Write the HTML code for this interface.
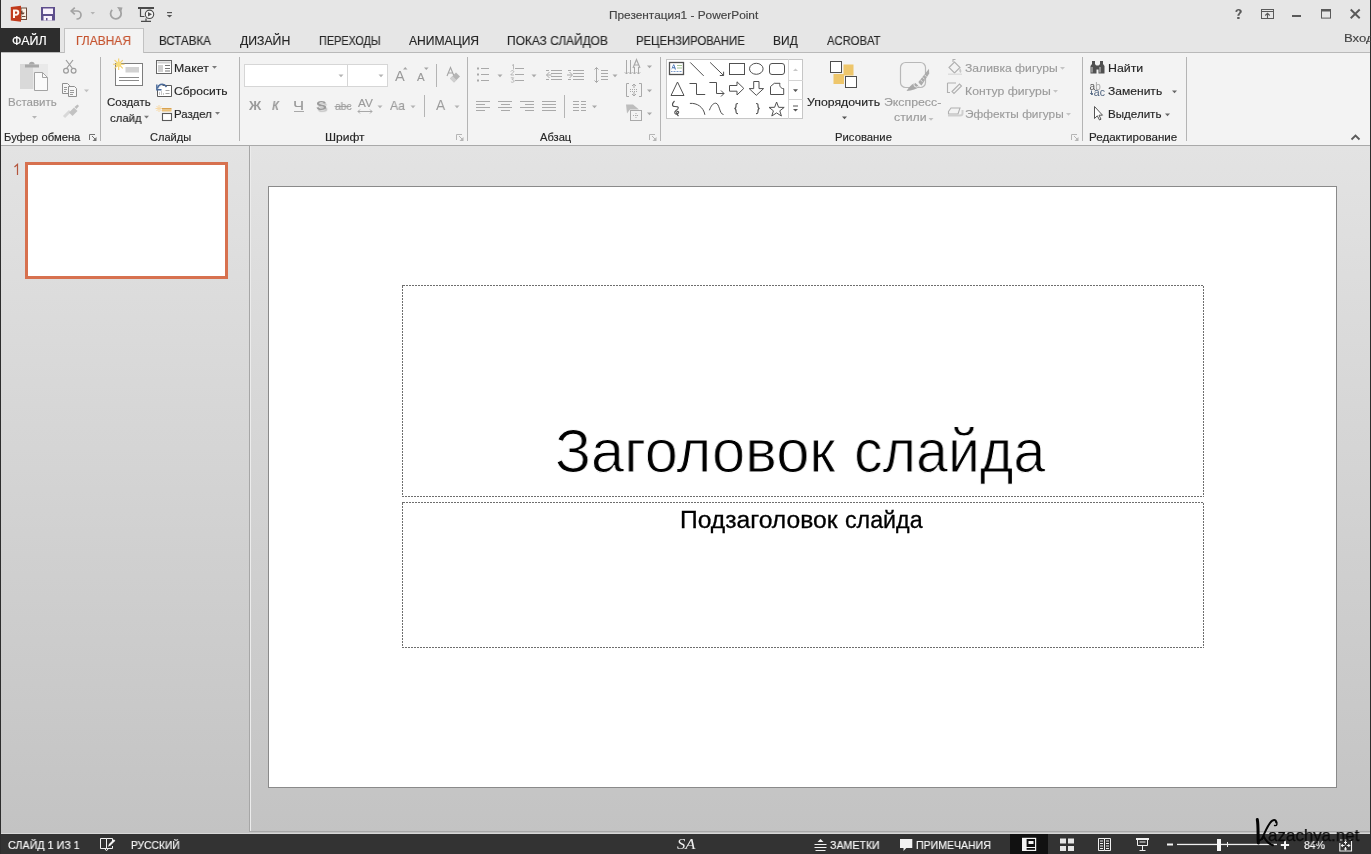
<!DOCTYPE html>
<html><head><meta charset="utf-8"><style>
*{margin:0;padding:0;box-sizing:border-box}
html,body{width:1371px;height:854px;overflow:hidden}
body{position:relative;background:#e6e6e6;font-family:"Liberation Sans",sans-serif}
.abs{position:absolute}
.tx{position:absolute;white-space:pre;transform-origin:0 0;will-change:transform}

</style></head><body>
<!-- title+tab row bg -->
<div class="abs" style="left:0;top:0;width:1371px;height:52px;background:#e6e6e6"></div>
<!-- file tab -->
<div class="abs" style="left:0;top:28px;width:60px;height:25px;background:#2d2d2d"></div>
<!-- ribbon -->
<div class="abs" style="left:0;top:52px;width:1371px;height:94px;background:#f3f3f3;border-top:1px solid #b9b9b9;border-bottom:1px solid #a9a9a9"></div>
<!-- active tab -->
<div class="abs" style="left:64px;top:28px;width:80px;height:25px;background:#f3f3f3;border:1px solid #c2c2c2;border-bottom:none"></div>
<!-- panes -->
<div class="abs" style="left:0;top:146px;width:1371px;height:688px;background:linear-gradient(#e3e3e3,#c3c3c3)"></div>
<div class="abs" style="left:249px;top:146px;width:1px;height:686px;background:#a6a6a6"></div>
<div class="abs" style="left:250px;top:146px;width:1px;height:686px;background:#ececec"></div>
<div class="abs" style="left:250px;top:831px;width:1121px;height:1px;background:#a8a8a8"></div>
<div class="abs" style="left:0;top:833px;width:1371px;height:1px;background:#d8d8d8"></div>
<!-- thumbnail -->
<div class="abs" style="left:25px;top:162px;width:203px;height:117px;background:#fff;border:3px solid #d7714f"></div>
<!-- slide -->
<div class="abs" style="left:268px;top:186px;width:1069px;height:602px;background:#fff;border:1px solid #8a8a8a"></div>
<!-- placeholders -->
<svg class="abs" style="left:0;top:0" width="1371" height="854"><g fill="none" stroke="#6e6e6e" stroke-width="1" stroke-dasharray="2 1" shape-rendering="crispEdges"><rect x="402.5" y="285.5" width="801" height="211"/><rect x="402.5" y="502.5" width="801" height="145"/></g></svg>
<!-- status bar -->
<div class="abs" style="left:0;top:834px;width:1371px;height:20px;background:#333333"></div>
<div class="abs" style="left:1010px;top:834px;width:38px;height:20px;background:#111"></div>
<!-- window borders -->
<div class="abs" style="left:0;top:0;width:1px;height:854px;background:#2d2d2d"></div>
<div class="abs" style="left:1370px;top:0;width:1px;height:854px;background:#2d2d2d"></div>
<!-- font boxes -->
<div class="abs" style="left:244px;top:64px;width:144px;height:23px;background:#fff;border:1px solid #d6d6d6"></div>
<div class="abs" style="left:347px;top:64px;width:1px;height:23px;background:#d6d6d6"></div>
<!-- gallery -->
<div class="abs" style="left:666px;top:59px;width:137px;height:60px;background:#fff;border:1px solid #c6c6c6"></div>
<div class="abs" style="left:788px;top:59px;width:1px;height:60px;background:#d4d4d4"></div>
<div class="abs" style="left:788px;top:80px;width:15px;height:1px;background:#d4d4d4"></div>
<div class="abs" style="left:788px;top:99px;width:15px;height:1px;background:#d4d4d4"></div>

<svg class="abs" style="left:0;top:0;will-change:transform" width="1371" height="854" viewBox="0 0 1371 854">
<!-- group separators -->
<g fill="none" stroke="#b4b4b4" stroke-width="1" shape-rendering="crispEdges">
 <line x1="100.5" y1="57" x2="100.5" y2="141"/>
 <line x1="239.5" y1="57" x2="239.5" y2="141"/>
 <line x1="467.5" y1="57" x2="467.5" y2="141"/>
 <line x1="660.5" y1="57" x2="660.5" y2="141"/>
 <line x1="1082.5" y1="57" x2="1082.5" y2="141"/>
 <line x1="1186.5" y1="57" x2="1186.5" y2="141"/>
 <line x1="436.5" y1="64" x2="436.5" y2="87"/>
 <line x1="424.5" y1="95" x2="424.5" y2="117"/>
 <line x1="564.5" y1="95" x2="564.5" y2="118"/>
</g>
<!-- ===== QAT ===== -->
<g>
 <rect x="21" y="8" width="5.5" height="11.5" fill="#fbf3e8" stroke="#6b4a3a" stroke-width="1"/>
 <path d="M22.5 10.5 a2 2 0 1 0 2 2 h-2z" fill="#6b4a3a"/>
 <line x1="22" y1="16.5" x2="25.5" y2="16.5" stroke="#6b4a3a" stroke-width="1"/>
 <path d="M10.8 7 L21 5.8 L21 21.8 L10.8 20.5 Z" fill="#c13a1b"/>
 <path d="M14 18 V10.5 h2.2 a2.1 2.1 0 0 1 0 4.2 h-2.2" fill="none" stroke="#fff6ee" stroke-width="2"/>
 <!-- save -->
 <rect x="41" y="7" width="14" height="13.5" fill="#5e4e8c"/>
 <rect x="43" y="8.5" width="10" height="5.5" fill="#f8f0fb"/>
 <path d="M43.5 20.5 V16 h8.5 v4.5 h-4.5 v-2.5 h-1.5 v2.5z" fill="#f8f0fb"/>
 <!-- undo -->
 <g fill="none" stroke="#a3a3a3" stroke-width="1.7">
  <path d="M71.5 11 H77 a4 4 0 0 1 0 8 h-0.5"/>
  <path d="M74.8 7.6 L71.2 11 L74.8 14.4"/>
 </g>
 <path d="M90.5 12 h4.5 l-2.25 2.5z" fill="#b5b5b5"/>
 <!-- redo -->
 <g fill="none" stroke="#a3a3a3" stroke-width="1.8">
  <path d="M119.3 9.6 A5.3 5.3 0 1 1 112.2 9.8"/>
 </g>
 <path d="M117 7 L122.5 7.5 L121 12.5 Z" fill="#a3a3a3"/>
 <!-- slideshow -->
 <rect x="138" y="7" width="16" height="2" fill="#4a4a4a"/>
 <path d="M140.5 9 V16.5 H144.5" fill="none" stroke="#4a4a4a" stroke-width="1.2"/>
 <circle cx="149.5" cy="14.3" r="4.2" fill="#f4f4f4" stroke="#4a4a4a" stroke-width="1.1"/>
 <path d="M148 12 L152 14.3 L148 16.6Z" fill="#555"/>
 <path d="M146 18.5 V21 M141 21.3 H151" fill="none" stroke="#4a4a4a" stroke-width="1.2"/>
 <rect x="167" y="12" width="5" height="1.2" fill="#555"/>
 <path d="M166.8 15 h5.4 l-2.7 2.6z" fill="#555"/>
</g>
<!-- ===== window controls ===== -->
<g fill="none" stroke="#5a5a5a">
 <rect x="1261.5" y="9.5" width="12" height="9" stroke-width="1"/>
 <line x1="1262" y1="11.5" x2="1273" y2="11.5" stroke-width="1"/>
 <path d="M1267.5 18 V13.5 M1265.3 15.5 L1267.5 13.2 L1269.7 15.5" stroke-width="1.1"/>
 <line x1="1292" y1="16" x2="1301" y2="16" stroke-width="2"/>
 <rect x="1321.5" y="9.5" width="9" height="8.6" stroke-width="1"/>
 <line x1="1321.5" y1="10.5" x2="1330.5" y2="10.5" stroke-width="2"/>
 <path d="M1350.7 9.5 L1359.7 18.3 M1359.7 9.5 L1350.7 18.3" stroke-width="1.9"/>
</g>
<path d="M1235.3 11.7 C1235.5 9.8 1236.8 9 1238.6 9 C1240.6 9 1241.8 10 1241.8 11.6 C1241.8 13.6 1239.4 13.8 1239.4 15.8 H1237.3 C1237.3 13.4 1239.6 13 1239.6 11.7 C1239.6 11 1239.1 10.6 1238.5 10.6 C1237.8 10.6 1237.3 11 1237.2 11.9 Z M1237.2 17 h2.4 v1.9 h-2.4z" fill="#5a5a5a"/>
<!-- ===== Clipboard group ===== -->
<g>
 <rect x="20" y="64" width="28" height="25" fill="#e9e9e9"/>
 <rect x="20" y="64" width="13" height="25" fill="#d9d9d9"/>
 <path d="M29 64.5 a2.8 2.8 0 0 1 5.6 0z" fill="#a9a9a9"/>
 <rect x="25" y="64.5" width="14" height="3" fill="#a9a9a9"/>
 <path d="M34.5 72.5 H42.5 L47.5 77.5 V90.5 H34.5Z" fill="#fafafa" stroke="#a3a3a3" stroke-width="1"/>
 <path d="M42.5 72.5 V77.5 H47.5" fill="none" stroke="#a3a3a3"/>
 <path d="M32 116 h5 l-2.5 2.8z" fill="#b5b5b5"/>
 <!-- scissors -->
 <g fill="none" stroke="#9c9c9c" stroke-width="1.2">
  <path d="M66 60 L72.5 68.5 M73 60 L66.5 68.5"/>
  <circle cx="66" cy="70.8" r="2.4"/>
  <circle cx="73.6" cy="70.8" r="2.4"/>
 </g>
 <!-- copy -->
 <g fill="#f6f6f6" stroke="#8f8f8f" stroke-width="1">
  <path d="M62.5 83.5 H67.5 L69.5 85.5 V93.5 H62.5Z"/>
  <path d="M68.5 86.5 H74.5 L76.5 88.5 V96.5 H68.5Z"/>
 </g>
 <path d="M64 87.5 h3 M64 89.5 h3 M64 91.5 h2 M70 90.5 h4 M70 92.5 h4 M70 94.5 h3" stroke="#9a9a9a" stroke-width="1" shape-rendering="crispEdges"/>
 <path d="M84 89.5 h5 l-2.5 2.8z" fill="#c0c0c0"/>
 <!-- format painter -->
 <path d="M64 117 L70 111" stroke="#d8d8d8" stroke-width="3"/>
 <path d="M69 112.5 L74 107.5 L77.5 111 L72.5 116Z" fill="#c2c2c2"/>
 <path d="M74.5 107 L77.5 104.5 L79 106 L76.5 109Z" fill="#bdbdbd"/>
</g>
<!-- ===== Slides group ===== -->
<g>
 <rect x="115.5" y="63.5" width="27" height="22" fill="#fff" stroke="#7d7d7d" stroke-width="1"/>
 <rect x="125.5" y="67" width="13.5" height="5.5" fill="#d2d2d2"/>
 <path d="M119 77.5 H139 M119 80.5 H139" stroke="#8c8c8c" stroke-width="1"/>
 <g stroke="#f2cf6a" stroke-width="1.1">
  <path d="M118.7 58.5 V70 M113 64.2 H124.5 M114.6 60.1 L122.8 68.3 M122.8 60.1 L114.6 68.3"/>
 </g>
 <circle cx="118.7" cy="64.2" r="2.6" fill="#f7dc7a"/>
 <path d="M144 115.8 h5 l-2.5 2.8z" fill="#7a7a7a"/>
 <!-- layout -->
 <rect x="156.5" y="60.5" width="15" height="13" fill="#fff" stroke="#666" stroke-width="1"/>
 <rect x="157.5" y="61.5" width="13" height="2" fill="#d0d0d0"/>
 <rect x="158" y="65" width="5" height="7" fill="#d0d0d0"/>
 <path d="M165 65.5 h5 M165 68.5 h5 M165 71 h5" stroke="#777" stroke-width="1"/>
 <path d="M212 66 h5 l-2.5 2.8z" fill="#7a7a7a"/>
 <!-- reset -->
 <path d="M162.5 85.5 H171.5 V96.5 H157.5 V90" fill="#fff" stroke="#5a5a5a" stroke-width="1"/>
 <path d="M165.5 90.5 h4 M165.5 93.5 h4" stroke="#9a9a9a" stroke-width="0.9"/>
 <path d="M159.5 95 v-3 M161.5 95 v-4 M163.5 95 v-2" stroke="#c9c9c9" stroke-width="1"/>
 <path d="M166.5 87 C165 84.5 162.5 83.8 160.5 84.5 C159 85 158 86.5 157.3 88.6" fill="none" stroke="#4a6a9a" stroke-width="1.5"/>
 <path d="M156.8 84.5 V89.8 H161.5" fill="none" stroke="#4a6a9a" stroke-width="1.4"/>
 <!-- section -->
 <g stroke="#f7d9a6" stroke-width="1">
  <path d="M159 105 V112 M155.5 108.5 H162.5 M156.5 106 L161.5 111 M161.5 106 L156.5 111"/>
 </g>
 <rect x="162" y="108" width="9.5" height="1.5" fill="#d9a24f"/>
 <rect x="162" y="109.5" width="9.5" height="2" fill="#ecc27a"/>
 <rect x="162.5" y="113.5" width="9" height="7" fill="#fff" stroke="#5a5a5a" stroke-width="1.1"/>
 <path d="M215 112 h5 l-2.5 2.8z" fill="#7a7a7a"/>
</g>

<!-- launchers -->
<g id="launchers" fill="none" stroke="#707070" stroke-width="1">
 <path d="M89.5 140 V134.5 H95"/>
 <path d="M456.5 140 V134.5 H462" stroke="#b5b5b5"/>
 <path d="M649.5 140 V134.5 H655" stroke="#b5b5b5"/>
 <path d="M1071.5 140 V134.5 H1077" stroke="#b5b5b5"/>
</g>
<g fill="#707070">
 <path d="M96.5 137 V141 H92.5Z"/><path d="M92 136 L95 139" stroke="#707070" stroke-width="1"/>
 <path d="M463.5 137 V141 H459.5Z" fill="#b5b5b5"/><path d="M459 136 L462 139" stroke="#b5b5b5" stroke-width="1"/>
 <path d="M656.5 137 V141 H652.5Z" fill="#b5b5b5"/><path d="M652 136 L655 139" stroke="#b5b5b5" stroke-width="1"/>
 <path d="M1078.5 137 V141 H1074.5Z" fill="#b5b5b5"/><path d="M1074 136 L1077 139" stroke="#b5b5b5" stroke-width="1"/>
</g>
<!-- ===== Font group ===== -->
<g fill="#b3b3b3">
 <path d="M338.5 74.5 h5 l-2.5 2.8z"/>
 <path d="M378.5 74.5 h5 l-2.5 2.8z"/>
 <path d="M403 69.5 h4.5 l-2.25 -2.5z" fill="#a5a5a5"/>
 <path d="M424 67.5 h4.6 l-2.3 2.5z" fill="#a5a5a5"/>
 <path d="M377.5 105.5 h5 l-2.5 2.8z"/>
 <path d="M410.5 105.5 h5 l-2.5 2.8z"/>
 <path d="M454.5 105.5 h5 l-2.5 2.8z"/>
</g>
<g fill="none" stroke="#a8a8a8" stroke-width="1">
 <path d="M294 111.5 h10"/>
 <path d="M334.5 106.5 h16.5"/>
 <path d="M358 111.5 h14 M360 109.5 l-2 2 l2 2 M370 109.5 l2 2 l-2 2"/>
</g>
<!-- clear formatting -->
<path d="M447 76 L450.5 67.5 L454 76 M448.3 73 h4.4" fill="none" stroke="#a5a5a5" stroke-width="1.1"/>
<path d="M450 78.5 L456 72.5 L460 76.5 L454 82.5Z" fill="#b5b5b5"/>
<path d="M450 78.5 L452.5 76 L456.5 80 L454 82.5Z" fill="#d0d0d0"/>
<!-- ===== Paragraph group ===== -->
<g fill="#a9a9a9">
 <rect x="477" y="67.5" width="2" height="2"/><rect x="477" y="73.5" width="2" height="2"/><rect x="477" y="79.5" width="2" height="2"/>
 <path d="M497.5 74.5 h5 l-2.5 2.8z"/>
 <path d="M531.5 74.5 h5 l-2.5 2.8z"/>
 <path d="M612.5 74.5 h5 l-2.5 2.8z"/>
 <path d="M647 65.5 h5 l-2.5 2.8z"/>
 <path d="M647 89.5 h5 l-2.5 2.8z"/>
 <path d="M647 112.5 h5 l-2.5 2.8z"/>
 <path d="M592 105.5 h5 l-2.5 2.8z"/>
</g>
<g fill="none" stroke="#a9a9a9" stroke-width="1" shape-rendering="crispEdges">
 <path d="M481 68.5 h8 M481 74.5 h8 M481 80.5 h8"/>
 <path d="M515 68.5 h9 M515 74.5 h9 M515 80.5 h9"/>
 <path d="M551 70.5 h11 M551 73.5 h11 M551 76.5 h11 M551 79.5 h11 M546 70.5 h3 M546 79.5 h3"/>
 <path d="M573 70.5 h11 M573 73.5 h11 M573 76.5 h11 M573 79.5 h11 M568 70.5 h3 M568 79.5 h3"/>
 <path d="M476 101.5 h14 M476 104.5 h9 M476 107.5 h14 M476 110.5 h9"/>
 <path d="M498 101.5 h14 M500.5 104.5 h9 M498 107.5 h14 M500.5 110.5 h9"/>
 <path d="M520 101.5 h14 M525 104.5 h9 M520 107.5 h14 M525 110.5 h9"/>
 <path d="M542 101.5 h14 M542 104.5 h14 M542 107.5 h14 M542 110.5 h14"/>
 <path d="M573 101.5 h5.5 M580.5 101.5 h5.5 M573 104.5 h5.5 M580.5 104.5 h5.5 M573 107.5 h5.5 M580.5 107.5 h5.5 M573 110.5 h5.5 M580.5 110.5 h5.5"/>
 <path d="M600.5 70.5 h7.5 M600.5 73.5 h7.5 M600.5 76.5 h7.5 M600.5 79.5 h7.5"/>
</g>
<g fill="none" stroke="#a9a9a9" stroke-width="1">
 <path d="M512 65.5 l1.5 -1 v5 M510.8 71.5 c0.5 -1.3 3 -1.3 3 0.2 c0 1 -3 2 -3 3.3 h3.2 M510.8 77.8 h2.8 l-1.5 1.8 c1.5 0 2 0.8 2 1.5 c0 1.5 -2.5 1.5 -3.2 0.6" stroke-width="0.8"/>
 <path d="M549.5 72 L546.5 75 L549.5 78 M546.5 75 h5"/>
 <path d="M569.5 72 L572.5 75 L569.5 78 M567 75 h5"/>
 <path d="M596.5 67.5 V82.5 M594.5 69.5 L596.5 67.5 L598.5 69.5 M594.5 80.5 L596.5 82.5 L598.5 80.5"/>
 <!-- text direction -->
 <path d="M626.5 60 V74 M630.5 60 V74 M624.8 72.3 L626.5 74 L628.2 72.3 M628.8 72.3 L630.5 74 L632.2 72.3 M634.5 67 V74 M638.5 67 V74 M632.8 72.3 L634.5 74 L636.2 72.3 M636.8 72.3 L638.5 74 L640.2 72.3"/>
 <path d="M633 68 L636.5 59.5 L640 68 M634.3 65 h4.4" stroke-width="1.2"/>
 <!-- align text -->
 <path d="M629 83.5 h-2.5 v13 h2.5 M639 83.5 h2.5 v13 h-2.5"/>
 <path d="M634 84 v4 M632 86 l2 -2 l2 2 M634 96 v-4 M632 94 l2 2 l2 -2"/>
 <path d="M630 89.5 h8 M630 91.5 h8" stroke-dasharray="1 1"/>
 <!-- smartart -->
 <rect x="630.5" y="110.5" width="11" height="10"/>
 <path d="M636 113 v5 M633 115.5 h6" stroke-dasharray="1 1"/>
</g>
<path d="M626 104.5 h7 l6 5 h-9 l-3 4Z" fill="#bdbdbd"/>

<!-- ===== Drawing gallery ===== -->
<g fill="none" stroke="#505050" stroke-width="1">
 <rect x="669.5" y="62.5" width="14" height="12" stroke-width="1.3"/>
 <path d="M690.2 62.4 L703.7 75.9"/>
 <path d="M710.1 62.4 L723.6 75.5 M719.8 75.5 H723.6 V71.7"/>
 <rect x="729.5" y="63.5" width="15" height="11"/>
 <ellipse cx="756.3" cy="68.8" rx="6.8" ry="5.5"/>
 <rect x="769.5" y="63.5" width="15" height="11" rx="2.5"/>
 <path d="M677.5 82 L684 95.5 H671Z"/>
 <path d="M689.5 83.5 H696.5 V94.5 H705.2"/>
 <path d="M709.4 82.5 H716.5 V93.5 H724 M721 90.5 L724 93.5 L721 96.5"/>
 <path d="M729.5 85.5 H737 V81.8 L743.8 88.4 L737 95 V91.2 H729.5Z"/>
 <path d="M753.7 81.5 H759 V88.6 H763.6 L756.3 95.3 L749.2 88.6 H753.7Z"/>
 <path d="M770.5 94.5 V86.5 L774.3 83.3 H780 C779 86 781 88.8 783.7 88.6 V94.5Z"/>
 <path d="M674.5 101 C672 103.5 671.5 106.5 675 106.5 C679 106.5 679.5 108 676 110.5 C673.5 112.5 675 115 677.5 113.8 C679.5 112.8 678.8 110.8 677.2 111.5 C676 112.2 677 114.5 678.5 116" stroke-width="1.1"/>
 <path d="M689.9 103.4 C697 102.8 703.5 107 704.9 114.8"/>
 <path d="M709.4 110.3 C711 106 712.8 103.2 715.7 103.2 C719.5 103.2 719.5 114.5 723.5 114.5"/>
 <path d="M738 103.5 C736 103.5 736 104 736 106 C736 108 735.5 108.5 734.3 108.5 C735.5 108.5 736 109 736 111 C736 113 736 113.7 738 113.7" stroke-width="1.2"/>
 <path d="M756 103.5 C758 103.5 758 104 758 106 C758 108 758.5 108.5 759.7 108.5 C758.5 108.5 758 109 758 111 C758 113 758 113.7 756 113.7" stroke-width="1.2"/>
 <path d="M776.6 102 L778.6 107.3 L784.2 107.4 L779.8 110.8 L781.4 116 L776.6 112.9 L771.8 116 L773.4 110.8 L769 107.4 L774.6 107.3Z"/>
</g>
<path d="M793 71 h5 l-2.5 -2.6z" fill="#c8c8c8"/>
<path d="M793 89.3 h5 l-2.5 2.6z" fill="#555"/>
<path d="M793 106 h5" stroke="#555" stroke-width="1"/>
<path d="M793 109 h5 l-2.5 2.6z" fill="#555"/>
<g fill="#3f6fb2" stroke="none">
 <path d="M671.4 69.5 L673.2 64.5 h1 L676 69.5 h-1.1 l-0.5 -1.3 h-2.2 l-0.5 1.3z M672.9 67.3 h1.5 l-0.75 -2z"/>
</g>
<path d="M677 65.5 h5 M677 68 h5" stroke="#9cbf8a" stroke-width="0.9"/>
<path d="M671 71.5 h11" stroke="#6f92c6" stroke-width="0.9" stroke-dasharray="1 0.5"/>
<!-- arrange -->
<rect x="843.5" y="64.5" width="10" height="11" fill="#eec66b"/>
<rect x="833.5" y="74" width="10.5" height="10" fill="#eec66b"/>
<rect x="830.5" y="61.5" width="11" height="11" fill="#fff" stroke="#4d4d4d" stroke-width="1"/>
<rect x="845.5" y="76.5" width="11" height="11" fill="#fff" stroke="#4d4d4d" stroke-width="1"/>
<path d="M842 116.5 h5 l-2.5 2.8z" fill="#555"/>
<!-- express styles -->
<rect x="900.5" y="62.5" width="25" height="25" rx="5" fill="#f3f3f3" stroke="#b8b8b8" stroke-width="1.2"/>
<path d="M918 82.5 L929 68.8 L929.2 73.5 L921.5 85.5Z" fill="#ababab"/><path d="M920.5 80 l2 1.5 M922.5 77.5 l2 1.5 M924.5 75 l2 1.5" stroke="#f3f3f3" stroke-width="0.8"/>
<path d="M906.5 91 C909 87 911.5 84.5 915 82.8 L919.5 86.5 C917 89 912 90.5 906.5 91Z" fill="#a9a9a9"/><circle cx="916.5" cy="84.5" r="2.6" fill="none" stroke="#f3f3f3" stroke-width="0.9"/>
<path d="M928.5 118 h5 l-2.5 2.8z" fill="#c0c0c0"/>
<!-- shape fill/outline/effects -->
<g fill="none" stroke="#b0b0b0" stroke-width="1.1">
 <path d="M949 67.5 L954.5 62 L960 67.5 L954.5 73Z"/>
 <path d="M953 62 V59.5 h2.5"/>
 <path d="M947.5 83 h8.5 M947.5 83 v9.5 h2.5"/>
 <path d="M952 91.5 L959.5 84 L961.5 86 L954 93.5Z"/>
 <path d="M948.5 111.5 L951 108 H960 L958 114 H948.5Z"/>
</g>
<path d="M960 68 C961.5 70 962 72 960.5 73 C959 72 959 70 960 68Z" fill="#c8c8c8"/>
<rect x="948" y="73.5" width="14" height="1.5" fill="#dedede"/>
<path d="M948 115.5 h12 c1.5 0 2.5 -1 2.5 -2 V110" fill="none" stroke="#cfcfcf" stroke-width="2"/>
<path d="M1060 67 h5 l-2.5 2.8z M1053 90 h5 l-2.5 2.8z M1066 113 h5 l-2.5 2.8z" fill="#c4c4c4"/>
<!-- ===== Editing group ===== -->
<g fill="#505050">
 <path d="M1090.5 73.5 V66 L1092 64 V61 H1095 V64 L1096.5 66 V73.5Z"/>
 <path d="M1098.5 73.5 V66 L1100 64 V61 H1103 V64 L1104.5 66 V73.5Z"/>
 <rect x="1096" y="65.5" width="3" height="4"/>
</g>
<path d="M1092 67 V72.5 M1100 67 V72.5" stroke="#e0e0e0" stroke-width="0.9"/>
<text x="1089.5" y="89.5" font-family="Liberation Sans" font-size="10" fill="#555">a</text>
<text x="1095.3" y="89.5" font-family="Liberation Sans" font-size="10" fill="#a8a8a8">b</text>
<text x="1093.8" y="96.3" font-family="Liberation Sans" font-size="10.5" fill="#4a5f7c">ac</text>
<path d="M1091.5 90.5 v3.8 h1.5 M1090.2 93 l1.3 1.5 l1.3 -1.5" fill="none" stroke="#4a5f7c" stroke-width="0.9"/>
<path d="M1172 90.5 h5 l-2.5 2.8z" fill="#666"/>
<path d="M1094.5 106.5 V118.5 L1097.3 115.8 L1099.5 120 L1101 119.2 L1099 115.2 H1102.5Z" fill="#fff" stroke="#555" stroke-width="1"/>
<path d="M1165 113.5 h5 l-2.5 2.8z" fill="#666"/>
<path d="M1351.5 139.5 L1355.5 135.5 L1359.5 139.5" fill="none" stroke="#5a5a5a" stroke-width="1.8"/>

<path d="M17.5 175 V164.3 L14.5 167" fill="none" stroke="#b4553c" stroke-width="1.2"/>
<!-- ===== Status bar ===== -->
<g fill="none" stroke="#f2f2f2" stroke-width="1">
 <path d="M106.5 838.5 H100.5 V848.5 H106.5 V838.5 H112.5 V841 M112.5 846 V848.5 H106.5"/>
 <path d="M105 849 l1.5 1.8 l1.5 -1.8"/>
</g>
<path d="M108 846.8 L109 844 L113.8 839.2 L115.3 840.7 L110.5 845.5Z" fill="#f2f2f2"/>
<!-- notes icon -->
<path d="M817.5 842 L820.5 839 L823.5 842Z" fill="#f2f2f2"/>
<path d="M814.5 844.5 h12 M814.5 847.5 h12 M815.5 850.5 h10" stroke="#f2f2f2" stroke-width="1"/>
<!-- comment icon -->
<path d="M900 839 h12.3 v9 h-6 l-2.8 3 v-3 h-3.5z" fill="#f2f2f2"/>
<!-- normal view -->
<g fill="none" stroke="#f5f5f5" stroke-width="1.2">
 <rect x="1022.6" y="838.4" width="13" height="12"/>
 <path d="M1026 838.5 V850.5 M1026 847.5 H1035.5"/>
</g>
<rect x="1022.6" y="838.4" width="3.4" height="12" fill="#f5f5f5"/>
<rect x="1028.5" y="841" width="5" height="3" fill="#f5f5f5"/>
<!-- slide sorter -->
<g fill="#e6e6e6">
 <rect x="1060" y="838.5" width="6" height="5"/>
 <rect x="1068" y="838.5" width="6" height="5"/>
 <rect x="1060" y="846" width="6" height="5"/>
 <rect x="1068" y="846" width="6" height="5"/>
</g>
<!-- reading view -->
<g fill="none" stroke="#f0f0f0" stroke-width="1">
 <path d="M1098.5 838.5 H1104.5 L1104.5 850.5 H1098.5Z M1104.5 838.5 H1110.5 V850.5 H1104.5"/>
 <path d="M1100 841 h3 M1100 843.5 h3 M1100 846 h3 M1100 848.5 h3 M1106 841 h3 M1106 843.5 h3 M1106 846 h3 M1106 848.5 h3"/>
</g>
<!-- slideshow -->
<g fill="none" stroke="#f0f0f0" stroke-width="1">
 <path d="M1136 838.8 H1149 M1137.5 839 V845.5 H1147.5 V839 M1142.5 845.5 V850 M1139.5 850.5 H1145.5"/>
 <path d="M1139.5 842 h6"/>
</g>
<rect x="1136" y="838" width="13" height="2" fill="#f0f0f0"/>
<!-- zoom -->
<rect x="1167" y="843.5" width="6" height="2" fill="#f5f5f5"/>
<rect x="1177" y="843.8" width="100" height="1.3" fill="#f0f0f0"/>
<rect x="1227" y="842" width="1" height="5" fill="#f0f0f0"/>
<rect x="1217" y="839" width="4" height="12" fill="#f8f8f8"/>
<path d="M1280.8 845 h8.3 M1285 840.7 v8.5" stroke="#f5f5f5" stroke-width="2"/>
<g fill="none" stroke="#f2f2f2" stroke-width="1.1">
 <path d="M1339.8 843 V851 H1351.5 V841 M1340 840 H1343 M1344.5 840 H1346.5 M1348.5 840 H1351"/>
 <path d="M1345.5 841 V844.5 M1344 842.5 H1347 M1341 845.5 H1344.5 M1342.3 844 V847 M1350.3 845.5 H1346.8 M1348.8 844 V847 M1345.5 850.5 V847 M1344 849 H1347"/>
</g>
<!-- watermark K -->
<g fill="none" stroke="#050505" stroke-linecap="round">
 <path d="M1257.3 819.5 C1258.5 826 1257.8 836 1258.3 843" stroke-width="3"/>
 <path d="M1276.2 822.5 C1276 818.8 1272.5 819.3 1270 823 C1266.5 828 1264 834 1262 839" stroke-width="2"/>
 <path d="M1274.5 825.5 C1277 826 1277.5 824 1276.5 821.5" stroke-width="1.4"/>
 <path d="M1258.5 841 C1261 840 1263 838 1264 837 C1266 841 1269 844 1273 845.3" stroke-width="2"/>
</g>
</svg>

<div class="tx" style="left:609.47px;top:10px;font-family:'Liberation Sans';font-size:11.5px;line-height:11.5px;font-weight:400;font-style:normal;color:#444;transform:scaleX(1.0299);-webkit-text-stroke:0.15px #444;">Презентация1 - PowerPoint</div><div class="tx" style="left:12.46px;top:35px;font-family:'Liberation Sans';font-size:12px;line-height:12px;font-weight:400;font-style:normal;color:#ffffff;transform:scaleX(1.0375);-webkit-text-stroke:0.15px #ffffff;">ФАЙЛ</div><div class="tx" style="left:76.40px;top:35px;font-family:'Liberation Sans';font-size:12px;line-height:12px;font-weight:400;font-style:normal;color:#c5532f;transform:scaleX(0.9962);-webkit-text-stroke:0.15px #c5532f;">ГЛАВНАЯ</div><div class="tx" style="left:158.83px;top:35px;font-family:'Liberation Sans';font-size:12px;line-height:12px;font-weight:400;font-style:normal;color:#262626;transform:scaleX(0.9660);-webkit-text-stroke:0.15px #262626;">ВСТАВКА</div><div class="tx" style="left:239.80px;top:35px;font-family:'Liberation Sans';font-size:12px;line-height:12px;font-weight:400;font-style:normal;color:#262626;transform:scaleX(1.0184);-webkit-text-stroke:0.15px #262626;">ДИЗАЙН</div><div class="tx" style="left:319.00px;top:35px;font-family:'Liberation Sans';font-size:12px;line-height:12px;font-weight:400;font-style:normal;color:#262626;transform:scaleX(0.9030);-webkit-text-stroke:0.15px #262626;">ПЕРЕХОДЫ</div><div class="tx" style="left:409.20px;top:35px;font-family:'Liberation Sans';font-size:12px;line-height:12px;font-weight:400;font-style:normal;color:#262626;transform:scaleX(1.0087);-webkit-text-stroke:0.15px #262626;">АНИМАЦИЯ</div><div class="tx" style="left:507.21px;top:35px;font-family:'Liberation Sans';font-size:12px;line-height:12px;font-weight:400;font-style:normal;color:#262626;transform:scaleX(0.9920);-webkit-text-stroke:0.15px #262626;">ПОКАЗ СЛАЙДОВ</div><div class="tx" style="left:636.16px;top:35px;font-family:'Liberation Sans';font-size:12px;line-height:12px;font-weight:400;font-style:normal;color:#262626;transform:scaleX(0.9421);-webkit-text-stroke:0.15px #262626;">РЕЦЕНЗИРОВАНИЕ</div><div class="tx" style="left:773.30px;top:35px;font-family:'Liberation Sans';font-size:12px;line-height:12px;font-weight:400;font-style:normal;color:#262626;transform:scaleX(0.9958);-webkit-text-stroke:0.15px #262626;">ВИД</div><div class="tx" style="left:827.30px;top:35px;font-family:'Liberation Sans';font-size:12px;line-height:12px;font-weight:400;font-style:normal;color:#262626;transform:scaleX(0.9368);-webkit-text-stroke:0.15px #262626;">ACROBAT</div><div class="tx" style="left:1344.36px;top:33px;font-family:'Liberation Sans';font-size:11.5px;line-height:11.5px;font-weight:400;font-style:normal;color:#444;transform:scaleX(1.1400);-webkit-text-stroke:0.15px #444;">Вход</div><div class="tx" style="left:7.60px;top:97px;font-family:'Liberation Sans';font-size:11.5px;line-height:11.5px;font-weight:400;font-style:normal;color:#9b9b9b;transform:scaleX(1.0000);-webkit-text-stroke:0.15px #9b9b9b;">Вставить</div><div class="tx" style="left:106.70px;top:97px;font-family:'Liberation Sans';font-size:11.5px;line-height:11.5px;font-weight:400;font-style:normal;color:#262626;transform:scaleX(0.9976);-webkit-text-stroke:0.15px #262626;">Создать</div><div class="tx" style="left:109.90px;top:113px;font-family:'Liberation Sans';font-size:11.5px;line-height:11.5px;font-weight:400;font-style:normal;color:#262626;transform:scaleX(0.9875);-webkit-text-stroke:0.15px #262626;">слайд</div><div class="tx" style="left:174.33px;top:63px;font-family:'Liberation Sans';font-size:11.5px;line-height:11.5px;font-weight:400;font-style:normal;color:#262626;transform:scaleX(1.0677);-webkit-text-stroke:0.15px #262626;">Макет</div><div class="tx" style="left:174.35px;top:86px;font-family:'Liberation Sans';font-size:11.5px;line-height:11.5px;font-weight:400;font-style:normal;color:#262626;transform:scaleX(1.0480);-webkit-text-stroke:0.15px #262626;">Сбросить</div><div class="tx" style="left:174.41px;top:109px;font-family:'Liberation Sans';font-size:11.5px;line-height:11.5px;font-weight:400;font-style:normal;color:#262626;transform:scaleX(0.9944);-webkit-text-stroke:0.15px #262626;">Раздел</div><div class="tx" style="left:3.58px;top:132px;font-family:'Liberation Sans';font-size:11px;line-height:11px;font-weight:400;font-style:normal;color:#262626;transform:scaleX(1.0216);-webkit-text-stroke:0.15px #262626;">Буфер обмена</div><div class="tx" style="left:149.70px;top:132px;font-family:'Liberation Sans';font-size:11px;line-height:11px;font-weight:400;font-style:normal;color:#262626;transform:scaleX(1.0026);-webkit-text-stroke:0.15px #262626;">Слайды</div><div class="tx" style="left:325.41px;top:132px;font-family:'Liberation Sans';font-size:11px;line-height:11px;font-weight:400;font-style:normal;color:#262626;transform:scaleX(1.0943);-webkit-text-stroke:0.15px #262626;">Шрифт</div><div class="tx" style="left:540.40px;top:132px;font-family:'Liberation Sans';font-size:11px;line-height:11px;font-weight:400;font-style:normal;color:#262626;transform:scaleX(1.0129);-webkit-text-stroke:0.15px #262626;">Абзац</div><div class="tx" style="left:834.77px;top:132px;font-family:'Liberation Sans';font-size:11px;line-height:11px;font-weight:400;font-style:normal;color:#262626;transform:scaleX(1.0278);-webkit-text-stroke:0.15px #262626;">Рисование</div><div class="tx" style="left:1089.15px;top:132px;font-family:'Liberation Sans';font-size:11px;line-height:11px;font-weight:400;font-style:normal;color:#262626;transform:scaleX(1.0530);-webkit-text-stroke:0.15px #262626;">Редактирование</div><div class="tx" style="left:807.23px;top:97px;font-family:'Liberation Sans';font-size:11.5px;line-height:11.5px;font-weight:400;font-style:normal;color:#262626;transform:scaleX(1.0672);-webkit-text-stroke:0.15px #262626;">Упорядочить</div><div class="tx" style="left:883.63px;top:97px;font-family:'Liberation Sans';font-size:11.5px;line-height:11.5px;font-weight:400;font-style:normal;color:#9b9b9b;transform:scaleX(1.0692);-webkit-text-stroke:0.15px #9b9b9b;">Экспресс-</div><div class="tx" style="left:893.50px;top:112px;font-family:'Liberation Sans';font-size:11.5px;line-height:11.5px;font-weight:400;font-style:normal;color:#9b9b9b;transform:scaleX(1.0667);-webkit-text-stroke:0.15px #9b9b9b;">стили</div><div class="tx" style="left:964.84px;top:63px;font-family:'Liberation Sans';font-size:11.5px;line-height:11.5px;font-weight:400;font-style:normal;color:#9b9b9b;transform:scaleX(1.0558);-webkit-text-stroke:0.15px #9b9b9b;">Заливка фигуры</div><div class="tx" style="left:965.33px;top:86px;font-family:'Liberation Sans';font-size:11.5px;line-height:11.5px;font-weight:400;font-style:normal;color:#9b9b9b;transform:scaleX(1.0658);-webkit-text-stroke:0.15px #9b9b9b;">Контур фигуры</div><div class="tx" style="left:964.87px;top:109px;font-family:'Liberation Sans';font-size:11.5px;line-height:11.5px;font-weight:400;font-style:normal;color:#9b9b9b;transform:scaleX(1.0298);-webkit-text-stroke:0.15px #9b9b9b;">Эффекты фигуры</div><div class="tx" style="left:1108.23px;top:63px;font-family:'Liberation Sans';font-size:11.5px;line-height:11.5px;font-weight:400;font-style:normal;color:#262626;transform:scaleX(1.0742);-webkit-text-stroke:0.15px #262626;">Найти</div><div class="tx" style="left:1108.25px;top:86px;font-family:'Liberation Sans';font-size:11.5px;line-height:11.5px;font-weight:400;font-style:normal;color:#262626;transform:scaleX(1.0480);-webkit-text-stroke:0.15px #262626;">Заменить</div><div class="tx" style="left:1108.29px;top:109px;font-family:'Liberation Sans';font-size:11.5px;line-height:11.5px;font-weight:400;font-style:normal;color:#262626;transform:scaleX(1.0077);-webkit-text-stroke:0.15px #262626;">Выделить</div><div class="tx" style="left:248.50px;top:99px;font-family:'Liberation Sans';font-size:13px;line-height:13px;font-weight:700;font-style:normal;color:#9b9b9b;transform:scaleX(1.0417);">Ж</div><div class="tx" style="left:272.10px;top:99px;font-family:'Liberation Sans';font-size:13px;line-height:13px;font-weight:700;font-style:italic;color:#9b9b9b;transform:scaleX(0.8556);">К</div><div class="tx" style="left:293.21px;top:99px;font-family:'Liberation Sans';font-size:13px;line-height:13px;font-weight:400;font-style:normal;color:#9a9a9a;transform:scaleX(1.2857);-webkit-text-stroke:0.15px #9a9a9a;">Ч</div><div class="tx" style="left:316.06px;top:99px;font-family:'Liberation Sans';font-size:13px;line-height:13px;font-weight:700;font-style:normal;color:#9b9b9b;transform:scaleX(1.2429);text-shadow:1px 1.5px 1px #c4c4c4;">S</div><div class="tx" style="left:334.90px;top:101px;font-family:'Liberation Sans';font-size:11px;line-height:11px;font-weight:400;font-style:normal;color:#9b9b9b;transform:scaleX(0.9412);-webkit-text-stroke:0.15px #9b9b9b;">abc</div><div class="tx" style="left:394.50px;top:69px;font-family:'Liberation Sans';font-size:14px;line-height:14px;font-weight:400;font-style:normal;color:#9b9b9b;transform:scaleX(1.0444);">A</div><div class="tx" style="left:417.00px;top:72px;font-family:'Liberation Sans';font-size:11px;line-height:11px;font-weight:400;font-style:normal;color:#9b9b9b;transform:scaleX(1.0429);-webkit-text-stroke:0.15px #9b9b9b;">A</div><div class="tx" style="left:390.00px;top:99px;font-family:'Liberation Sans';font-size:13px;line-height:13px;font-weight:400;font-style:normal;color:#9b9b9b;transform:scaleX(0.9375);-webkit-text-stroke:0.15px #9b9b9b;">Aa</div><div class="tx" style="left:435.80px;top:98px;font-family:'Liberation Sans';font-size:14px;line-height:14px;font-weight:400;font-style:normal;color:#9b9b9b;transform:scaleX(0.9778);">A</div><div class="tx" style="left:357.50px;top:98px;font-family:'Liberation Sans';font-size:11px;line-height:11px;font-weight:400;font-style:normal;color:#9b9b9b;transform:scaleX(1.0714);-webkit-text-stroke:0.15px #9b9b9b;">AV</div><div class="tx" style="left:7.52px;top:840px;font-family:'Liberation Sans';font-size:11px;line-height:11px;font-weight:400;font-style:normal;color:#fafafa;transform:scaleX(0.9764);-webkit-text-stroke:0.15px #fafafa;">СЛАЙД 1 ИЗ 1</div><div class="tx" style="left:130.77px;top:840px;font-family:'Liberation Sans';font-size:11px;line-height:11px;font-weight:400;font-style:normal;color:#fafafa;transform:scaleX(0.9320);-webkit-text-stroke:0.15px #fafafa;">РУССКИЙ</div><div class="tx" style="left:829.64px;top:840px;font-family:'Liberation Sans';font-size:11px;line-height:11px;font-weight:400;font-style:normal;color:#fafafa;transform:scaleX(0.9640);-webkit-text-stroke:0.15px #fafafa;">ЗАМЕТКИ</div><div class="tx" style="left:915.74px;top:840px;font-family:'Liberation Sans';font-size:11px;line-height:11px;font-weight:400;font-style:normal;color:#fafafa;transform:scaleX(0.9571);-webkit-text-stroke:0.15px #fafafa;">ПРИМЕЧАНИЯ</div><div class="tx" style="left:1304.00px;top:840px;font-family:'Liberation Sans';font-size:11px;line-height:11px;font-weight:400;font-style:normal;color:#fafafa;transform:scaleX(0.9500);-webkit-text-stroke:0.15px #fafafa;">84%</div><div class="tx" style="left:676.80px;top:838px;font-family:'Liberation Serif';font-size:14px;line-height:14px;font-weight:400;font-style:italic;color:#f0f0f0;transform:scaleX(1.1867);">SA</div><div class="tx" style="left:555.44px;top:421px;font-family:'Liberation Sans';font-size:61px;line-height:61px;font-weight:400;font-style:normal;color:#000;transform:scaleX(0.9779);-webkit-text-stroke:1px #fff;">Заголовок</div><div class="tx" style="left:854.18px;top:421px;font-family:'Liberation Sans';font-size:61px;line-height:61px;font-weight:400;font-style:normal;color:#000;transform:scaleX(0.9393);-webkit-text-stroke:1px #fff;">слайда</div><div class="tx" style="left:680.06px;top:509px;font-family:'Liberation Sans';font-size:23px;line-height:23px;font-weight:400;font-style:normal;color:#000;transform:scaleX(1.0710);-webkit-text-stroke:0.3px #000;">Подзаголовок</div><div class="tx" style="left:844.89px;top:509px;font-family:'Liberation Sans';font-size:23px;line-height:23px;font-weight:400;font-style:normal;color:#000;transform:scaleX(1.0105);-webkit-text-stroke:0.3px #000;">слайда</div><div class="tx" style="left:1267.80px;top:827px;font-family:'Liberation Sans';font-size:17px;line-height:17px;font-weight:400;font-style:normal;color:#0a0a0a;transform:scaleX(0.9956);-webkit-text-stroke:0.25px #0a0a0a;">azachya.net</div>
</body></html>
